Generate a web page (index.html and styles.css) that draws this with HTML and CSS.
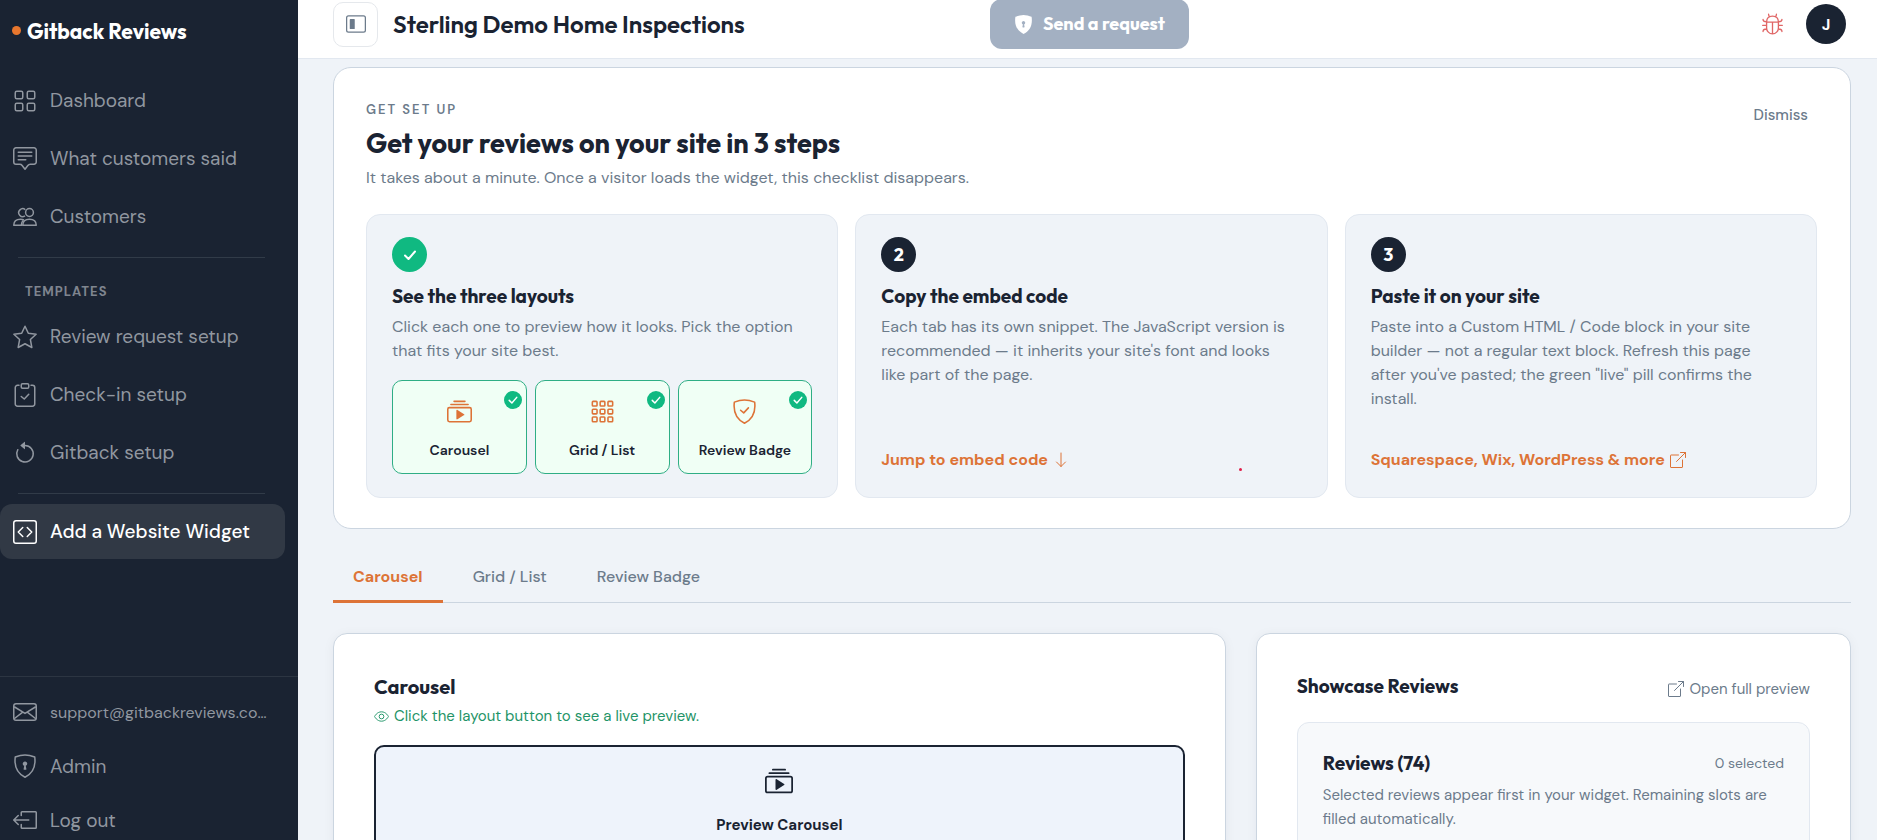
FILE: index.html
```
<!DOCTYPE html>
<html lang="en">
<head>
<meta charset="utf-8">
<title>Gitback Reviews</title>
<link rel="stylesheet" href="styles.css">
</head>
<body>
<svg class="sprite" aria-hidden="true">
  <symbol id="i-grid" viewBox="0 0 16 16"><g fill="none" stroke="currentColor"><rect x="1.5" y="1.5" width="5" height="5" rx="1"/><rect x="9.500" y="1.5" width="5" height="5" rx="1"/><rect x="1.5" y="9.500" width="5" height="5" rx="1"/><rect x="9.500" y="9.500" width="5" height="5" rx="1"/></g></symbol>
  <symbol id="i-chat" viewBox="0 0 16 16"><g fill="none" stroke="currentColor" stroke-linejoin="round" stroke-linecap="round"><path d="M2 .5h12A1.500 1.500 0 0 1 15.500 2v8a1.500 1.500 0 0 1-1.500 1.500h-2.500a2 2 0 0 0-1.600.8L8 14.800l-1.900-2.500a2 2 0 0 0-1.600-.8H2A1.500 1.500 0 0 1 .5 10V2A1.500 1.500 0 0 1 2 .5z"/><path d="M3.500 3.500h9M3.500 6h9M3.500 8.500h5"/></g></symbol>
  <symbol id="i-people" viewBox="0 0 16 16"><g fill="none" stroke="currentColor" stroke-linejoin="round"><circle cx="11" cy="5" r="2.600"/><path d="M6.500 13.500C6.500 11.300 8 9.500 11 9.500s4.500 1.800 4.500 4z"/><path d="M8 7.200A2.600 2.600 0 1 1 8.200 3.200M6.300 13.500H.5c0-2.200 1.500-4 4.500-4 .9 0 1.700.2 2.300.5M5.500 13.500c0-1.300.4-2.400 1.300-3.200"/></g></symbol>
  <symbol id="i-star" viewBox="0 0 16 16"><path fill="none" stroke="currentColor" stroke-linejoin="round" d="M8 .8l2.200 4.700 5.200.7-3.800 3.500.95 5.300L8 12.500 3.450 15l.95-5.300L.6 6.200l5.200-.7z"/></symbol>
  <symbol id="i-clip" viewBox="0 0 16 16"><g fill="none" stroke="currentColor" stroke-linecap="round" stroke-linejoin="round"><path d="M4 1.500H3A1.500 1.500 0 0 0 1.500 3v11A1.500 1.500 0 0 0 3 15.500h10a1.500 1.500 0 0 0 1.500-1.500V3A1.500 1.500 0 0 0 13 1.500h-1"/><rect x="5.500" y=".5" width="5" height="3" rx=".8"/><path d="M5.500 9l2 1.700 3-3.200"/></g></symbol>
  <symbol id="i-undo" viewBox="0 0 16 16"><path fill="none" stroke="currentColor" stroke-linecap="round" d="M8 3a5.500 5.500 0 1 1-4.800 2.800"/><path fill="currentColor" d="M8 .8v4.400a.25.25 0 0 1-.4.200L5 3.200a.25.25 0 0 1 0-.4L7.600.6A.25.25 0 0 1 8 .8z"/></symbol>
  <symbol id="i-code" viewBox="0 0 16 16"><g fill="none" stroke="currentColor" stroke-linecap="round" stroke-linejoin="round"><rect x=".5" y=".5" width="15" height="15" rx="1.500"/><path d="M6.500 5l-3 3 3 3M9.500 5l3 3-3 3"/></g></symbol>
  <symbol id="i-mail" viewBox="0 0 16 16"><g fill="none" stroke="currentColor"><rect x=".5" y="2.500" width="15" height="11" rx="1.500"/><path d="M.8 4.500L8 8.900l7.200-4.400M.8 12.500l5.700-4.400M15.200 12.500L9.500 8.100"/></g></symbol>
  <symbol id="i-lock" viewBox="0 0 16 16"><path fill="none" stroke="currentColor" stroke-linejoin="round" d="M8 .6c1.600 0 5 .8 6.500 1.400C15.300 8.500 13 13 8 15.500 3 13 .7 8.500 1.500 2 3 1.400 6.400.6 8 .6z"/><path fill="currentColor" d="M9.500 6.500a1.500 1.500 0 0 1-1 1.400l.4 2a.5.500 0 0 1-.5.600h-.8a.5.500 0 0 1-.5-.6l.4-2a1.500 1.500 0 1 1 2-1.400z"/></symbol>
  <symbol id="i-lockfill" viewBox="0 0 16 16"><path fill="currentColor" fill-rule="evenodd" d="M8 0c-1.700 0-5.200.9-6.800 1.500C.1 8.500 2.700 13.400 8 16c5.300-2.600 7.900-7.500 6.800-14.500C13.200.9 9.700 0 8 0zm0 5a1.500 1.500 0 0 1 .5 2.900l.4 2a.5.500 0 0 1-.5.600h-.8a.5.500 0 0 1-.5-.6l.4-2A1.500 1.500 0 0 1 8 5z"/></symbol>
  <symbol id="i-out" viewBox="0 0 16 16"><g fill="none" stroke="currentColor" stroke-linecap="round" stroke-linejoin="round"><path d="M5.500 5V3a.5.500 0 0 1 .5-.5h9a.5.500 0 0 1 .5.500v10a.5.500 0 0 1-.5.500H6a.5.500 0 0 1-.5-.5v-2M10.500 8H.7M3.500 5l-3 3 3 3"/></g></symbol>
  <symbol id="i-side" viewBox="0 0 16 16"><rect x=".5" y="1.500" width="15" height="13" rx="1.500" fill="none" stroke="currentColor"/><rect x="3" y="4" width="4" height="8" rx=".5" fill="currentColor"/></symbol>
  <symbol id="i-play" viewBox="0 0 16 16"><path fill="none" stroke="currentColor" stroke-linecap="round" d="M4.500 1.500h7M2.500 3.500h11"/><rect x=".5" y="5.500" width="15" height="9" rx="1" fill="none" stroke="currentColor"/><path fill="currentColor" d="M6 7.300v5.400c0 .4.400.5.700.3l4-2.600a.4.400 0 0 0 0-.8l-4-2.600c-.3-.2-.7-.1-.7.300z"/></symbol>
  <symbol id="i-nine" viewBox="0 0 16 16"><g fill="none" stroke="currentColor"><rect x="1.500" y="1.500" width="3" height="3" rx=".5"/><rect x="6.500" y="1.500" width="3" height="3" rx=".5"/><rect x="11.500" y="1.500" width="3" height="3" rx=".5"/><rect x="1.500" y="6.500" width="3" height="3" rx=".5"/><rect x="6.500" y="6.500" width="3" height="3" rx=".5"/><rect x="11.500" y="6.500" width="3" height="3" rx=".5"/><rect x="1.500" y="11.500" width="3" height="3" rx=".5"/><rect x="6.500" y="11.500" width="3" height="3" rx=".5"/><rect x="11.500" y="11.500" width="3" height="3" rx=".5"/></g></symbol>
  <symbol id="i-shield" viewBox="0 0 16 16"><g fill="none" stroke="currentColor" stroke-linecap="round" stroke-linejoin="round"><path d="M8 .6c1.600 0 5 .8 6.500 1.400C15.300 8.500 13 13 8 15.500 3 13 .7 8.500 1.500 2 3 1.400 6.400.6 8 .6z"/><path d="M5.500 7.200l2 1.700 3-3.200"/></g></symbol>
  <symbol id="i-check" viewBox="0 0 16 16"><path fill="none" stroke="currentColor" stroke-width="2" stroke-linecap="round" stroke-linejoin="round" d="M3 8.500l3.500 3.500L13 4.500"/></symbol>
  <symbol id="i-ext" viewBox="0 0 16 16"><path fill="none" stroke="currentColor" stroke-linecap="round" stroke-linejoin="round" d="M8.500 3H1a.5.500 0 0 0-.5.500V15a.5.500 0 0 0 .5.500h11a.5.500 0 0 0 .5-.5V8M10.500.5h5v5M15.500.5L6.500 9.500"/></symbol>
  <symbol id="i-down" viewBox="0 0 16 16"><path fill="none" stroke="currentColor" stroke-linecap="round" stroke-linejoin="round" d="M8 1v13.500M3.500 10L8 14.500l4.500-4.500"/></symbol>
  <symbol id="i-eye" viewBox="0 0 16 16"><g fill="none" stroke="currentColor"><path d="M.6 8S3 3 8 3s7.400 5 7.400 5S13 13 8 13 .6 8 .6 8z"/><circle cx="8" cy="8" r="2.500"/></g></symbol>
  <symbol id="i-bug" viewBox="0 0 16 16"><g fill="none" stroke="currentColor" stroke-linecap="round" stroke-linejoin="round"><path d="M3.500 6.500h9V11a4.500 4.500 0 0 1-9 0zM3.500 6.500C3.500 3.500 5.500 2 8 2s4.500 1.500 4.500 4.500M8 6.500v9M5 .5c0 1 .3 1.600 1 2M11 .5c0 1-.3 1.600-1 2M.8 4.500c0 1 .7 1.800 2.700 1.800M15.200 4.500c0 1-.7 1.800-2.700 1.800M.5 9h3M15.500 9h-3M.8 13.800c0-1.200.9-2 2.700-2M15.200 13.800c0-1.200-.9-2-2.700-2"/></g></symbol>
</svg>

<div class="app">
  <aside class="sidebar">
    <a class="brand" href="#"><span class="brand-dot"></span>Gitback Reviews</a>
    <nav class="nav">
      <a class="nav-item" href="#"><svg class="nav-icon"><use href="#i-grid"/></svg>Dashboard</a>
      <a class="nav-item" href="#"><svg class="nav-icon"><use href="#i-chat"/></svg>What customers said</a>
      <a class="nav-item" href="#"><svg class="nav-icon"><use href="#i-people"/></svg>Customers</a>
      <hr class="nav-divider">
      <p class="nav-label">TEMPLATES</p>
      <a class="nav-item" href="#"><svg class="nav-icon"><use href="#i-star"/></svg>Review request setup</a>
      <a class="nav-item" href="#"><svg class="nav-icon"><use href="#i-clip"/></svg>Check-in setup</a>
      <a class="nav-item" href="#"><svg class="nav-icon"><use href="#i-undo"/></svg>Gitback setup</a>
      <hr class="nav-divider">
      <a class="nav-item active" href="#" aria-current="page"><svg class="nav-icon"><use href="#i-code"/></svg>Add a Website Widget</a>
    </nav>
    <div class="side-foot">
      <a class="foot-item mail" href="#"><svg class="nav-icon"><use href="#i-mail"/></svg><span class="mail-text">support@gitbackreviews.co…</span></a>
      <a class="foot-item" href="#"><svg class="nav-icon"><use href="#i-lock"/></svg>Admin</a>
      <a class="foot-item" href="#"><svg class="nav-icon"><use href="#i-out"/></svg>Log out</a>
    </div>
  </aside>

  <div class="main">
    <header class="topbar">
      <div class="top-left">
        <button class="toggle" type="button" aria-label="Toggle sidebar"><svg class="toggle-icon"><use href="#i-side"/></svg></button>
        <h1 class="account">Sterling Demo Home Inspections</h1>
      </div>
      <button class="send" type="button"><svg class="send-icon"><use href="#i-lockfill"/></svg>Send a request</button>
      <div class="top-right">
        <button class="bug" type="button" aria-label="Report a bug"><svg class="bug-icon"><use href="#i-bug"/></svg></button>
        <button class="avatar" type="button">J</button>
      </div>
    </header>

    <main class="content">
      <section class="setup">
        <div class="setup-head">
          <div>
            <p class="eyebrow">GET SET UP</p>
            <h2 class="setup-title">Get your reviews on your site in 3 steps</h2>
            <p class="setup-sub">It takes about a minute. Once a visitor loads the widget, this checklist disappears.</p>
          </div>
          <button class="dismiss" type="button">Dismiss</button>
        </div>
        <div class="steps">
          <article class="step">
            <span class="step-num done"><svg class="done-icon"><use href="#i-check"/></svg></span>
            <h3 class="step-title">See the three layouts</h3>
            <p class="step-text">Click each one to preview how it looks. Pick the option that fits your site best.</p>
            <div class="layouts">
              <button class="layout" type="button"><svg class="layout-icon"><use href="#i-play"/></svg>Carousel<span class="tick"><svg class="tick-icon"><use href="#i-check"/></svg></span></button>
              <button class="layout" type="button"><svg class="layout-icon"><use href="#i-nine"/></svg>Grid / List<span class="tick"><svg class="tick-icon"><use href="#i-check"/></svg></span></button>
              <button class="layout" type="button"><svg class="layout-icon"><use href="#i-shield"/></svg>Review Badge<span class="tick"><svg class="tick-icon"><use href="#i-check"/></svg></span></button>
            </div>
          </article>
          <article class="step">
            <span class="step-num">2</span>
            <h3 class="step-title">Copy the embed code</h3>
            <p class="step-text">Each tab has its own snippet. The JavaScript version is recommended — it inherits your site's font and looks like part of the page.</p>
            <a class="step-link" href="#">Jump to embed code <svg class="link-icon"><use href="#i-down"/></svg></a>
            <span class="speck"></span>
          </article>
          <article class="step">
            <span class="step-num">3</span>
            <h3 class="step-title">Paste it on your site</h3>
            <p class="step-text">Paste into a Custom HTML / Code block in your site builder — not a regular text block. Refresh this page after you've pasted; the green "live" pill confirms the install.</p>
            <a class="step-link" href="#">Squarespace, Wix, WordPress &amp; more <svg class="link-icon"><use href="#i-ext"/></svg></a>
          </article>
        </div>
      </section>

      <div class="tabs" role="tablist">
        <button class="tab selected" type="button" role="tab" aria-selected="true">Carousel</button>
        <button class="tab" type="button" role="tab" aria-selected="false">Grid / List</button>
        <button class="tab" type="button" role="tab" aria-selected="false">Review Badge</button>
      </div>

      <div class="panels">
        <section class="panel wide">
          <h2 class="panel-title">Carousel</h2>
          <p class="hint"><svg class="hint-icon"><use href="#i-eye"/></svg>Click the layout button to see a live preview.</p>
          <button class="preview" type="button"><svg class="preview-icon"><use href="#i-play"/></svg>Preview Carousel</button>
        </section>
        <section class="panel">
          <div class="panel-head">
            <h2 class="showcase-title">Showcase Reviews</h2>
            <a class="open" href="#"><svg class="open-icon"><use href="#i-ext"/></svg>Open full preview</a>
          </div>
          <div class="reviews">
            <div class="reviews-head">
              <h3 class="reviews-title">Reviews (74)</h3>
              <span class="count">0 selected</span>
            </div>
            <p class="reviews-text">Selected reviews appear first in your widget. Remaining slots are filled automatically.</p>
          </div>
        </section>
      </div>
    </main>
  </div>
</div>
</body>
</html>
```

FILE: styles.css
```
:root {
  --ink: #1a2332;
  --muted: #6c7b8b;
  --line: #cbd5e0;
  --soft: #e2e8f0;
  --bg: #eff3f8;
  --orange: #dd7337;
  --green: #10b981;
  --body: "DM Sans", Inter, "Noto Sans", sans-serif;
  --head: Outfit, Lato, "Noto Sans", sans-serif;
}
* { box-sizing: border-box; }
body { margin: 0; background: var(--bg); color: var(--ink); font-family: var(--body); font-size: 16px; }
h1, h2, h3, p { margin: 0; }
button { font: inherit; color: inherit; background: none; border: 0; padding: 0; cursor: pointer; }
a { color: inherit; text-decoration: none; }
svg { flex: none; }
.sprite { position: absolute; width: 0; height: 0; }

.app { display: flex; height: 100vh; overflow: hidden; }

.sidebar { flex: none; width: 298px; background: var(--ink); color: #9197a0; display: flex; flex-direction: column; }
.brand { display: flex; align-items: center; gap: 6px; padding: 14px 12px 0; height: 47px; color: #fff; font: 700 21px/30px var(--head); }
.brand-dot { width: 9px; height: 9px; border-radius: 50%; background: #e8772e; }
.nav { display: flex; flex-direction: column; gap: 3px; margin-top: 26px; }
.nav-item { display: flex; align-items: center; gap: 13px; height: 55px; padding-left: 13px; margin-right: 13px; font-size: 19px; border-radius: 12px; }
.nav-item.active { background: #313945; color: #fff; font-weight: 500; }
.nav-icon { width: 24px; height: 24px; }
.nav-divider { width: auto; margin: 10px 33px 7px 18px; border: 0; border-top: 1px solid #313b48; }
.nav-label { padding-left: 25px; height: 38px; font-size: 13px; line-height: 48px; font-weight: 700; letter-spacing: 1px; color: #7f858f; }
.side-foot { margin-top: auto; border-top: 1px solid #2c3542; padding: 15px 25px 0 13px; display: flex; flex-direction: column; gap: 14px; }
.foot-item { display: flex; align-items: center; gap: 13px; height: 40px; font-size: 19px; }
.foot-item.mail { font-size: 16px; }
.mail-text { white-space: nowrap; }

.main { flex: 1; min-width: 0; display: flex; flex-direction: column; }
.topbar { flex: none; margin-top: -1px; height: 60px; padding: 0 31px 9px 35px; display: grid; grid-template-columns: 1fr auto 1fr; align-items: center; background: #fff; border-bottom: 1px solid var(--soft); }
.top-left { display: flex; align-items: center; gap: 15px; }
.toggle { width: 45px; height: 45px; border: 1px solid #e5e8ec; border-radius: 10px; display: grid; place-items: center; color: var(--muted); }
.toggle-icon { width: 20px; height: 20px; }
.account { font: 600 24px/30px var(--head); white-space: nowrap; }
.send { display: flex; align-items: center; justify-content: center; gap: 10px; height: 50px; padding: 0 24px; border-radius: 12px; background: #a3b0c2; color: #fff; font: 700 18px/24px var(--head); }
.send-icon { width: 19px; height: 19px; }
.top-right { display: flex; align-items: center; justify-content: flex-end; gap: 23px; }
.bug { height: 26px; color: #e06666; }
.bug-icon { width: 21px; height: 22px; display: block; }
.avatar { width: 40px; height: 40px; border-radius: 50%; background: var(--ink); color: #fff; font-size: 16px; font-weight: 700; }

.content { flex: 1; min-height: 0; overflow-y: auto; scrollbar-width: none; padding: 8px 26px 40px 35px; }
.setup { background: #fff; border: 1px solid var(--line); border-radius: 18px; padding: 29px 33px 30px 32px; }
.setup-head { display: flex; justify-content: space-between; align-items: flex-start; }
.eyebrow { font-size: 13px; line-height: 26px; font-weight: 600; letter-spacing: 2px; color: var(--muted); }
.setup-title { font: 700 27px/40px var(--head); }
.setup-sub { font-size: 16px; line-height: 30px; color: var(--muted); }
.dismiss { padding: 8px 9px; font-size: 15px; line-height: 20px; font-weight: 500; color: var(--muted); }
.steps { display: grid; grid-template-columns: repeat(3, 1fr); gap: 17px; margin-top: 21px; }
.step { position: relative; display: flex; flex-direction: column; align-items: flex-start; min-height: 284px; padding: 22px 25px 23px; border: 1px solid var(--soft); border-radius: 14px; background: var(--bg); }
.step-num { width: 35px; height: 35px; border-radius: 50%; display: grid; place-items: center; background: var(--ink); color: #fff; font: 700 18px/20px var(--head); }
.step-num.done { background: var(--green); }
.done-icon { width: 16px; height: 16px; }
.step-title { margin-top: 10px; font: 700 19px/28px var(--head); }
.step-text { margin-top: 5px; padding-right: 8px; font-size: 16px; line-height: 24px; color: var(--muted); }
.step-link { margin-top: auto; display: flex; align-items: center; gap: 5px; font-size: 16px; line-height: 28px; font-weight: 700; color: var(--orange); }
.link-icon { width: 16px; height: 16px; }
.speck { position: absolute; right: 85px; bottom: 26px; width: 3px; height: 3px; border-radius: 50%; background: #e11d48; }
.layouts { align-self: stretch; margin-top: auto; display: grid; grid-template-columns: repeat(3, 1fr); gap: 8px; }
.layout { position: relative; height: 94px; display: flex; flex-direction: column; align-items: center; gap: 16px; padding-top: 18px; border: 1px solid #2fae85; border-radius: 10px; background: #f0fff5; font-size: 14px; line-height: 20px; font-weight: 600; white-space: nowrap; }
.layout-icon { width: 25px; height: 25px; color: var(--orange); }
.tick { position: absolute; top: 10px; right: 4px; width: 18px; height: 18px; border-radius: 50%; display: grid; place-items: center; background: var(--green); color: #fff; }
.tick-icon { width: 12px; height: 12px; }

.tabs { display: flex; gap: 10px; margin-top: 22px; border-bottom: 1px solid var(--line); }
.tab { height: 52px; padding: 2px 20px 0; margin-bottom: -1px; border-bottom: 3px solid transparent; font-size: 16px; font-weight: 500; color: var(--muted); }
.tab.selected { border-color: var(--orange); color: var(--orange); font-weight: 700; }

.panels { display: grid; grid-template-columns: 3fr 2fr; gap: 30px; margin-top: 30px; }
.panel { background: #fff; border: 1px solid var(--line); border-radius: 14px; padding: 36px 40px; min-height: 480px; box-shadow: 0 2px 12px rgba(26, 35, 50, .05); }
.panel.wide { padding: 39px 40px; }
.panel-title { font: 700 20px/28px var(--head); }
.hint { display: flex; align-items: center; gap: 5px; font-size: 15px; line-height: 30px; color: #1f9468; }
.hint-icon { width: 15px; height: 15px; }
.preview { width: 100%; height: 118px; margin-top: 14px; border: 2px solid var(--ink); border-radius: 10px; background: #eef3fb; display: flex; flex-direction: column; align-items: center; gap: 18px; padding-top: 20px; font-size: 15px; line-height: 24px; font-weight: 700; }
.preview-icon { width: 28px; height: 28px; }
.panel-head { display: flex; justify-content: space-between; align-items: center; }
.showcase-title { font: 700 19px/28px var(--head); }
.open { display: flex; align-items: center; gap: 5px; padding-top: 7px; font-size: 15px; line-height: 24px; color: var(--muted); }
.open-icon { width: 16px; height: 16px; }
.reviews { margin-top: 21px; min-height: 300px; border: 1px solid var(--soft); border-radius: 12px; background: #f7f9fb; padding: 26px 25px; }
.reviews-head { display: flex; justify-content: space-between; align-items: center; }
.reviews-title { font: 700 19px/28px var(--head); }
.count { font-size: 14px; color: var(--muted); }
.reviews-text { margin-top: 6px; font-size: 15px; line-height: 24px; color: var(--muted); }
```
